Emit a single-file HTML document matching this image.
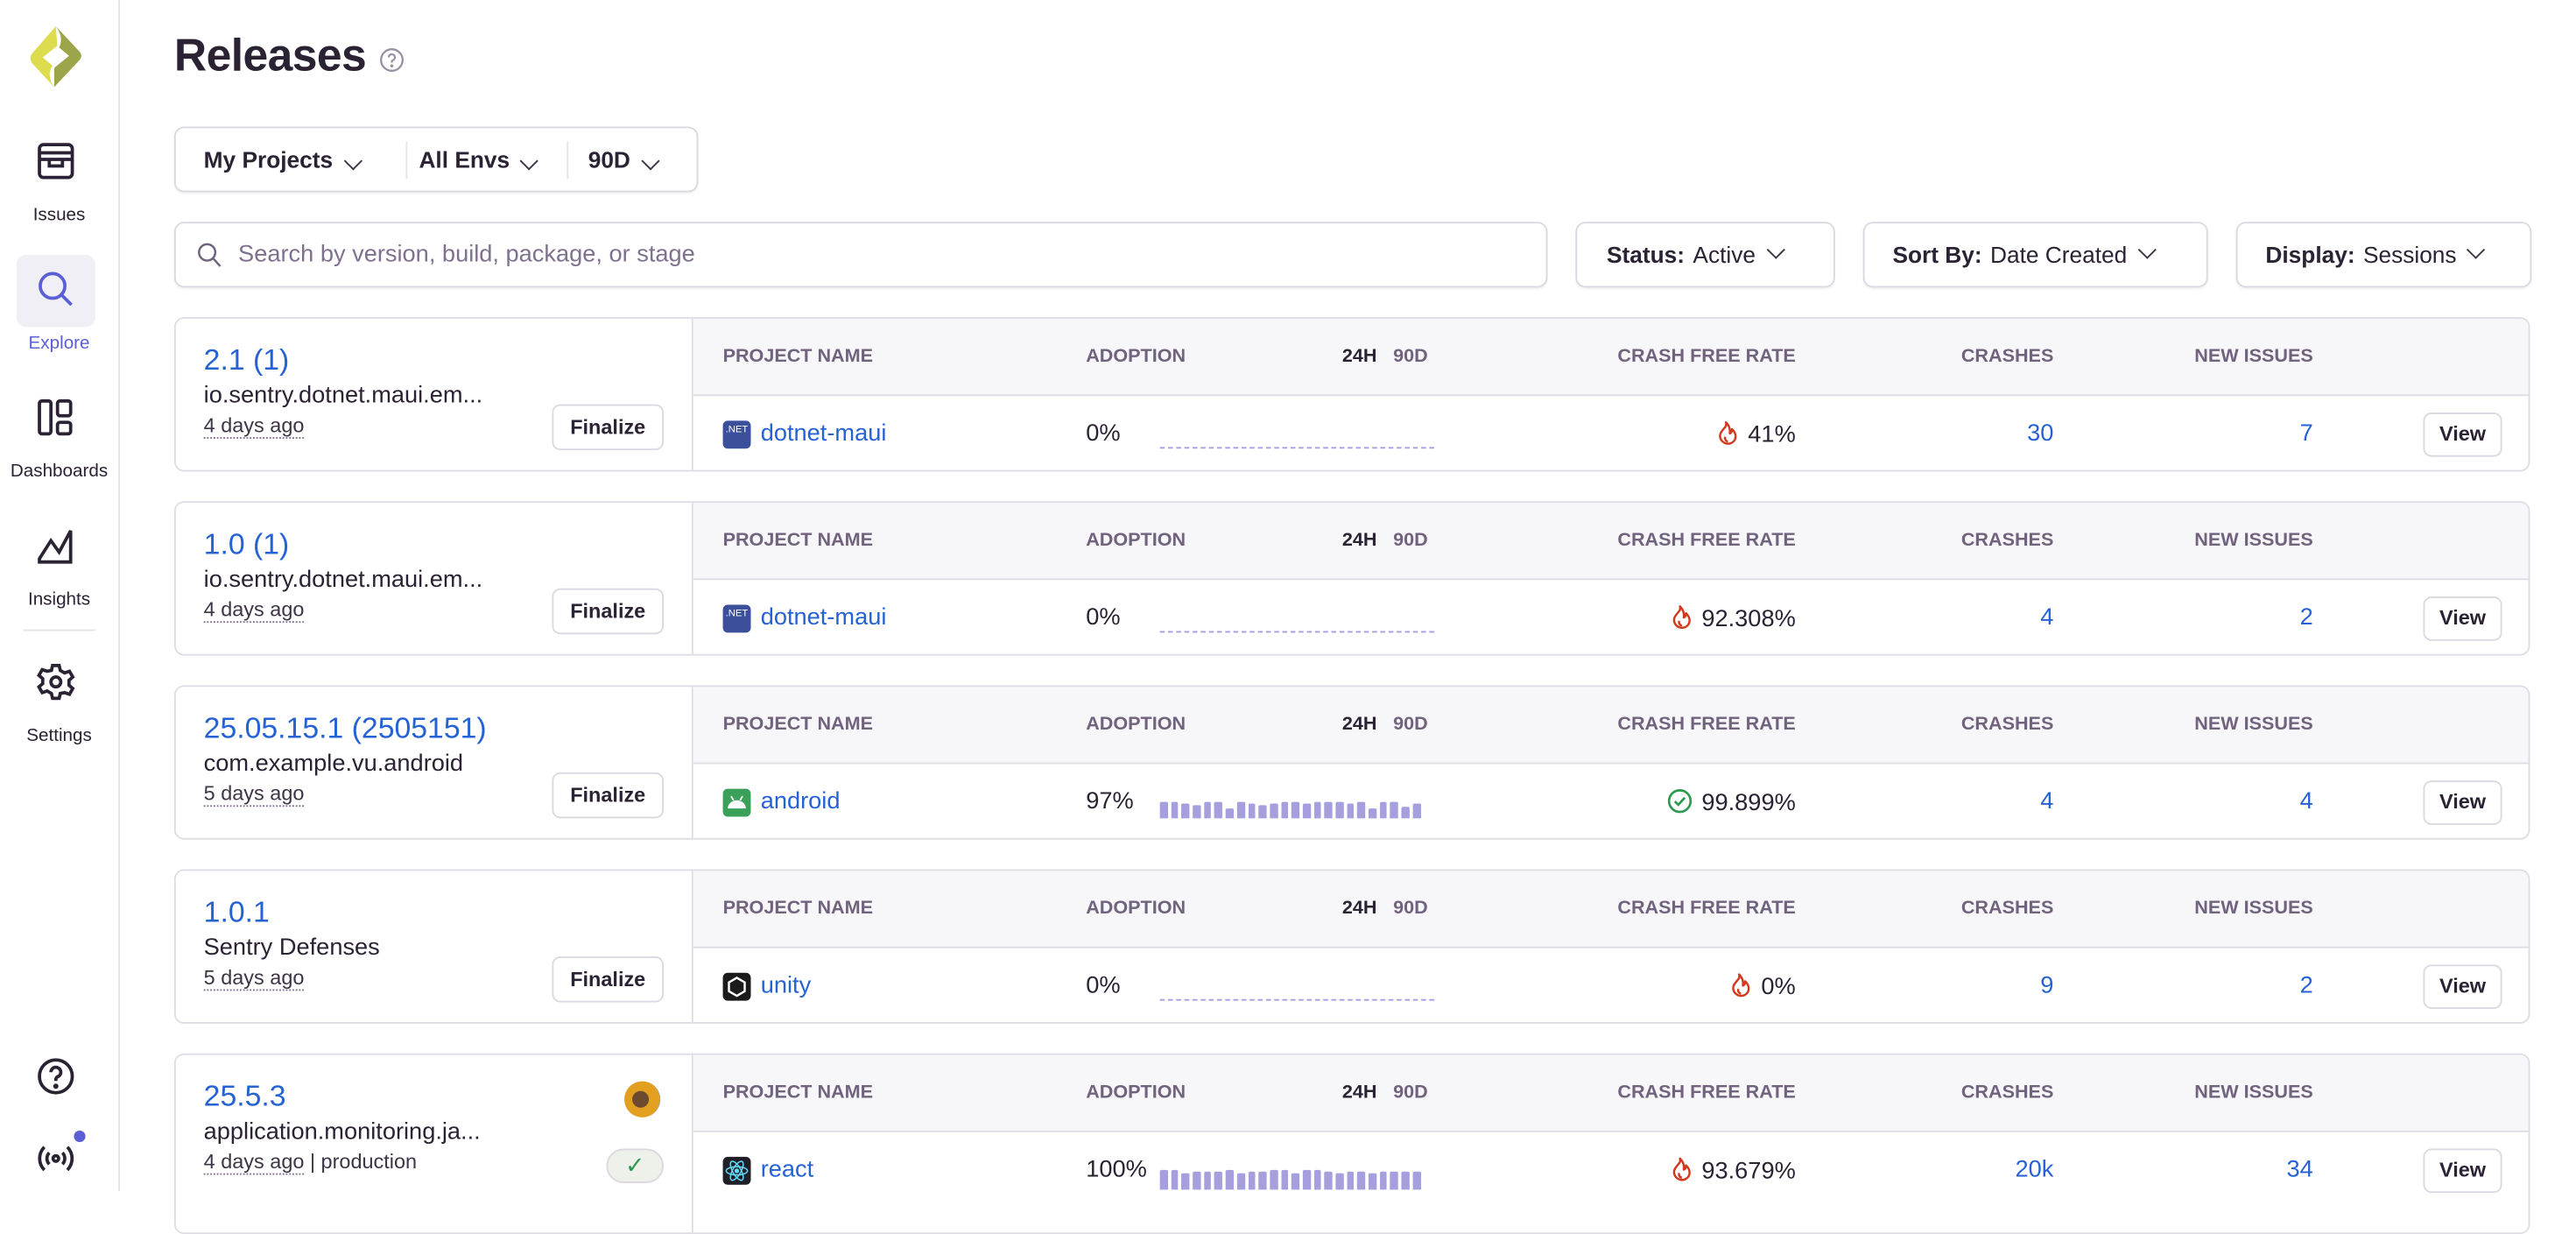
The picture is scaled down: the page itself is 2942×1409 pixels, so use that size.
<!DOCTYPE html>
<html><head><meta charset="utf-8"><style>
*{box-sizing:border-box;margin:0;padding:0}
html,body{width:2942px;height:1360px;overflow:hidden;background:#fff}
#w{position:absolute;left:0;top:0;width:1568px;height:725px;transform:scale(1.87628);transform-origin:0 0;font-family:"Liberation Sans",sans-serif;color:#2b2233}
.abs{position:absolute}
.side{position:absolute;left:0;top:0;width:73px;height:725px;border-right:1px solid #e6e3ea;background:#fff}
.nl{position:absolute;left:0;width:72px;text-align:center;font-size:11px;font-weight:500;color:#2b2233}
.ic{position:absolute;left:22px;width:24px;height:24px}
.btn{position:absolute;border:1px solid #dcd8e2;border-radius:6px;background:#fff;box-shadow:0 1px 1px rgba(0,0,0,.05);font-size:14px;display:flex;align-items:center}
.chev{display:inline-block;width:8px;height:8px;border-right:1.3px solid #3e3446;border-bottom:1.3px solid #3e3446;transform:rotate(45deg);margin-left:8px;margin-top:-6px}
.card{position:absolute;left:106px;width:1434px;height:94px;border:1px solid #e0dce5;border-radius:6px;overflow:hidden;background:#fff}
.lp{position:absolute;left:0;top:0;width:315px;height:100%;border-right:1px solid #e0dce5}
.ver{position:absolute;left:17px;top:15px;font-size:18px;color:#2562d4}
.pkg{position:absolute;left:17px;top:39px;font-size:14.5px;color:#2b2233;white-space:nowrap}
.date{position:absolute;left:17px;top:58px;font-size:12.5px;color:#3e3446;white-space:nowrap}
.date u{text-decoration:none;border-bottom:1px dotted #80708f}
.fin{position:absolute;left:229px;top:52px;width:68px;height:28px;border:1px solid #dcd8e2;border-radius:5px;font-size:12.5px;font-weight:600;text-align:center;line-height:26px}
.hd{position:absolute;left:315px;top:0;right:0;height:47px;background:#f7f6f9;border-bottom:1px solid #e0dce5}
.h{position:absolute;top:17px;font-size:11.5px;font-weight:600;color:#71637e;white-space:nowrap}
.r{text-align:right}
.row{position:absolute;top:62px;font-size:14.5px;white-space:nowrap}
.blue{color:#2562d4}
.pico{position:absolute;left:333px;top:62px;width:17px;height:17px;border-radius:3px}
.view{position:absolute;left:1368px;top:57px;width:48px;height:27px;border:1px solid #dcd8e2;border-radius:5px;font-size:12.5px;font-weight:600;text-align:center;line-height:25px}
.chart{position:absolute;left:599px;top:64px;width:167px;height:16px;display:flex;align-items:flex-end;gap:2px}
.chart i{display:block;width:4.7px;background:#a59fdd;border-radius:1px 1px 0 0}
.dash{position:absolute;left:599px;top:78px;width:167px;border-top:1px dashed #a59fdd}
.fire{vertical-align:-2px;margin-right:6px}
</style></head><body><div id="w">
<svg width="0" height="0" style="position:absolute"><defs><symbol id="fi" viewBox="0 0 14 16"><path d="M6 1C7 4 4 5 2.5 8.2 1.5 10.5 2.5 14 6.5 15 10 15.3 12.5 13 12.3 9.8 12.2 8 11 6.5 10 5.5 10 7 9.5 8 8.5 8.3 9 5.5 8 3 6 1Z M5.5 10.5C5 12 6 13.5 7.3 13.5" fill="none" stroke="#d13a1e" stroke-width="1.4" stroke-linejoin="round"/></symbol></defs></svg>

<div class="side">
  <svg class="abs" style="left:17px;top:15px" width="34" height="39" viewBox="0 0 34 39">
    <path d="M17 1 L3 17 Q0 20.5 3 24 L16 38 Q11 31 15 25 L9 20 L18 15 Z" fill="#dddc4e"/>
    <path d="M17 1 Q22 8 19 14 L25 19 L16 24 L16 38 L31 22 Q34 19 31 16 Z" fill="#9da54b"/>
    <path d="M19 12 L9 20 L16 21 L14 28 L25 19 L18 18 Z" fill="#fff"/>
  </svg>
  <svg class="ic" style="top:86px" viewBox="0 0 24 24" fill="none" stroke="#2b2233" stroke-width="2"><rect x="2" y="2" width="20" height="20" rx="2.5"/><path d="M2 7h20M2 11h20M2 11v0h6v4h8v-4h6"/></svg>
  <div class="nl" style="top:125px">Issues</div>
  <div class="abs" style="left:10px;top:155px;width:48px;height:44px;background:#f0eff6;border-radius:6px"></div>
  <svg class="ic" style="top:164px" viewBox="0 0 24 24" fill="none" stroke="#5b5fd6" stroke-width="2"><circle cx="10" cy="10" r="7.5"/><path d="M15.5 15.5l6 6"/></svg>
  <div class="nl" style="top:203px;color:#5b5fd6">Explore</div>
  <svg class="ic" style="top:242px" viewBox="0 0 24 24" fill="none" stroke="#2b2233" stroke-width="2"><rect x="2" y="2" width="7" height="20" rx="1.5"/><rect x="13" y="2" width="8" height="9" rx="1.5"/><rect x="13" y="15" width="8" height="7" rx="1.5"/></svg>
  <div class="nl" style="top:281px">Dashboards</div>
  <svg class="ic" style="top:320px" viewBox="0 0 24 24" fill="none" stroke="#2b2233" stroke-width="2"><path d="M2 22V20L9 9l5 7 7-13v19z"/></svg>
  <div class="nl" style="top:359px">Insights</div>
  <div class="abs" style="left:14px;top:383px;width:44px;border-top:1px solid #e6e3ea"></div>
  <svg class="ic" style="top:403px" viewBox="0 0 24 24" fill="none" stroke="#2b2233" stroke-width="2"><path d="M10 2h4l.7 3 2.6 1.5 3-1 2 3.5-2.3 2v3l2.3 2-2 3.5-3-1L14.7 19 14 22h-4l-.7-3-2.6-1.5-3 1-2-3.5 2.3-2v-3L1.7 8l2-3.5 3 1L9.3 5z"/><circle cx="12" cy="12" r="3"/></svg>
  <div class="nl" style="top:442px">Settings</div>
  <svg class="ic" style="top:643px" viewBox="0 0 24 24" fill="none" stroke="#2b2233" stroke-width="2"><circle cx="12" cy="12" r="10"/><path d="M9 9.5a3 3 0 1 1 4 2.8c-.7.4-1 1-1 1.7v.8"/><circle cx="12" cy="18" r=".6" fill="#2b2233"/></svg>
  <svg class="ic" style="top:693px" viewBox="0 0 24 24" fill="none" stroke="#2b2233" stroke-width="2"><path d="M5 5a10 10 0 0 0 0 14M19 5a10 10 0 0 1 0 14M8 8.5a5 5 0 0 0 0 7M16 8.5a5 5 0 0 1 0 7"/><circle cx="12" cy="12" r="1.7"/></svg>
  <div class="abs" style="left:45px;top:688px;width:7px;height:7px;border-radius:50%;background:#5b5fd6"></div>
</div>

<div class="abs" style="left:106px;top:18px;font-size:27.5px;font-weight:700;letter-spacing:-.3px">Releases</div>
<svg class="abs" style="left:231px;top:29px" width="15" height="15" viewBox="0 0 16 16" fill="none" stroke="#9a90a4" stroke-width="1.3"><circle cx="8" cy="8" r="7"/><path d="M6 6.3a2 2 0 1 1 2.6 1.9c-.4.2-.6.5-.6 1v.5"/><circle cx="8" cy="11.8" r=".4" fill="#9a90a4"/></svg>

<div class="btn" style="left:106px;top:77px;width:319px;height:40px;font-weight:600">
  <span style="position:absolute;left:17px">My Projects<span class="chev"></span></span>
  <span class="abs" style="left:140px;top:8px;height:23px;border-left:1px solid #e6e3ea"></span>
  <span style="position:absolute;left:148px">All Envs<span class="chev"></span></span>
  <span class="abs" style="left:238px;top:8px;height:23px;border-left:1px solid #e6e3ea"></span>
  <span style="position:absolute;left:251px">90D<span class="chev"></span></span>
</div>

<div class="btn" style="left:106px;top:135px;width:836px;height:40px;color:#80708f;font-size:14.5px">
  <svg style="margin-left:13px;margin-right:10px" width="15" height="16" viewBox="0 0 16 16" fill="none" stroke="#71637e" stroke-width="1.4"><circle cx="6.5" cy="6.5" r="5.3"/><path d="M10.5 10.5l4.5 5"/></svg>Search by version, build, package, or stage
</div>
<div class="btn" style="left:959px;top:135px;width:158px;height:40px;padding-left:18px"><b style="margin-right:5px">Status:</b>Active<span class="chev"></span></div>
<div class="btn" style="left:1134px;top:135px;width:210px;height:40px;padding-left:17px"><b style="margin-right:5px">Sort By:</b>Date Created<span class="chev"></span></div>
<div class="btn" style="left:1361px;top:135px;width:180px;height:40px;padding-left:17px"><b style="margin-right:5px">Display:</b>Sessions<span class="chev"></span></div>

<div class="card" style="top:193px">
  <div class="lp"><div class="ver">2.1 (1)</div><div class="pkg">io.sentry.dotnet.maui.em...</div><div class="date"><u>4 days ago</u></div><div class="fin">Finalize</div></div>
  <div class="hd"></div>
  <div class="h" style="left:333px">PROJECT NAME</div><div class="h" style="left:554px">ADOPTION</div><div class="h" style="left:710px;color:#2b2233">24H</div><div class="h" style="left:741px">90D</div>
  <div class="h r" style="right:446px">CRASH FREE RATE</div><div class="h r" style="right:289px">CRASHES</div><div class="h r" style="right:131px">NEW ISSUES</div>
  <div class="pico" style="background:#3b4f9b;color:#fff;font-size:6px;text-align:center;line-height:9px;padding-top:2px">.NET</div>
  <div class="row blue" style="left:356px">dotnet-maui</div>
  <div class="row" style="left:554px">0%</div><div class="dash"></div>
  <div class="row r" style="right:446px"><svg class="fire" width="13" height="15"><use href="#fi"/></svg>41%</div>
  <div class="row r blue" style="right:289px">30</div><div class="row r blue" style="right:131px">7</div>
  <div class="view">View</div>
</div>

<div class="card" style="top:305px">
  <div class="lp"><div class="ver">1.0 (1)</div><div class="pkg">io.sentry.dotnet.maui.em...</div><div class="date"><u>4 days ago</u></div><div class="fin">Finalize</div></div>
  <div class="hd"></div>
  <div class="h" style="left:333px">PROJECT NAME</div><div class="h" style="left:554px">ADOPTION</div><div class="h" style="left:710px;color:#2b2233">24H</div><div class="h" style="left:741px">90D</div>
  <div class="h r" style="right:446px">CRASH FREE RATE</div><div class="h r" style="right:289px">CRASHES</div><div class="h r" style="right:131px">NEW ISSUES</div>
  <div class="pico" style="background:#3b4f9b;color:#fff;font-size:6px;text-align:center;line-height:9px;padding-top:2px">.NET</div>
  <div class="row blue" style="left:356px">dotnet-maui</div>
  <div class="row" style="left:554px">0%</div><div class="dash"></div>
  <div class="row r" style="right:446px"><svg class="fire" width="13" height="15"><use href="#fi"/></svg>92.308%</div>
  <div class="row r blue" style="right:289px">4</div><div class="row r blue" style="right:131px">2</div>
  <div class="view">View</div>
</div>

<div class="card" style="top:417px">
  <div class="lp"><div class="ver">25.05.15.1 (2505151)</div><div class="pkg">com.example.vu.android</div><div class="date"><u>5 days ago</u></div><div class="fin">Finalize</div></div>
  <div class="hd"></div>
  <div class="h" style="left:333px">PROJECT NAME</div><div class="h" style="left:554px">ADOPTION</div><div class="h" style="left:710px;color:#2b2233">24H</div><div class="h" style="left:741px">90D</div>
  <div class="h r" style="right:446px">CRASH FREE RATE</div><div class="h r" style="right:289px">CRASHES</div><div class="h r" style="right:131px">NEW ISSUES</div>
  <div class="pico" style="background:#3aa05a"><svg width="17" height="17" viewBox="0 0 17 17"><path d="M3 12a5.5 5 0 0 1 11 0z" fill="#fff"/><path d="M5 4.5l1.5 2.5M12 4.5l-1.5 2.5" stroke="#fff" stroke-width="1"/></svg></div>
  <div class="row blue" style="left:356px">android</div>
  <div class="row" style="left:554px">97%</div>
  <div class="chart"><i style="height:10px"></i><i style="height:10px"></i><i style="height:9px"></i><i style="height:8px"></i><i style="height:10px"></i><i style="height:10px"></i><i style="height:6px"></i><i style="height:10px"></i><i style="height:9px"></i><i style="height:8px"></i><i style="height:9px"></i><i style="height:10px"></i><i style="height:10px"></i><i style="height:9px"></i><i style="height:10px"></i><i style="height:10px"></i><i style="height:10px"></i><i style="height:9px"></i><i style="height:10px"></i><i style="height:6px"></i><i style="height:10px"></i><i style="height:10px"></i><i style="height:7px"></i><i style="height:9px"></i></div>
  <div class="row r" style="right:446px"><svg style="vertical-align:-2px;margin-right:6px" width="15" height="15" viewBox="0 0 16 16" fill="none" stroke="#2b9a4e" stroke-width="1.5"><circle cx="8" cy="8" r="7"/><path d="M4.8 8.2l2.2 2.2 4.2-4.6"/></svg>99.899%</div>
  <div class="row r blue" style="right:289px">4</div><div class="row r blue" style="right:131px">4</div>
  <div class="view">View</div>
</div>

<div class="card" style="top:529px">
  <div class="lp"><div class="ver">1.0.1</div><div class="pkg">Sentry Defenses</div><div class="date"><u>5 days ago</u></div><div class="fin">Finalize</div></div>
  <div class="hd"></div>
  <div class="h" style="left:333px">PROJECT NAME</div><div class="h" style="left:554px">ADOPTION</div><div class="h" style="left:710px;color:#2b2233">24H</div><div class="h" style="left:741px">90D</div>
  <div class="h r" style="right:446px">CRASH FREE RATE</div><div class="h r" style="right:289px">CRASHES</div><div class="h r" style="right:131px">NEW ISSUES</div>
  <div class="pico" style="background:#1b1b1b"><svg width="17" height="17" viewBox="0 0 17 17" fill="none" stroke="#fff" stroke-width="1.3"><path d="M8.5 3l4.8 2.8v5.4L8.5 14l-4.8-2.8V5.8z"/></svg></div>
  <div class="row blue" style="left:356px">unity</div>
  <div class="row" style="left:554px">0%</div><div class="dash"></div>
  <div class="row r" style="right:446px"><svg class="fire" width="13" height="15"><use href="#fi"/></svg>0%</div>
  <div class="row r blue" style="right:289px">9</div><div class="row r blue" style="right:131px">2</div>
  <div class="view">View</div>
</div>

<div class="card" style="top:641px;height:110px">
  <div class="lp"><div class="ver">25.5.3</div><div class="pkg">application.monitoring.ja...</div><div class="date"><u>4 days ago</u> | production</div>
    <div class="abs" style="left:273px;top:16px;width:22px;height:22px;border-radius:50%;background:radial-gradient(circle at 45% 50%,#6b4a2e 0 30%,#e3a020 32% 70%,#9aa0a8 72%)"></div>
    <div class="abs" style="left:262px;top:57px;width:35px;height:21px;border-radius:11px;background:#eef0ea;border:1px solid #dcd8e2;color:#2b9a4e;text-align:center;font-size:14px;line-height:19px">&#10003;</div>
  </div>
  <div class="hd"></div>
  <div class="h" style="left:333px">PROJECT NAME</div><div class="h" style="left:554px">ADOPTION</div><div class="h" style="left:710px;color:#2b2233">24H</div><div class="h" style="left:741px">90D</div>
  <div class="h r" style="right:446px">CRASH FREE RATE</div><div class="h r" style="right:289px">CRASHES</div><div class="h r" style="right:131px">NEW ISSUES</div>
  <div class="pico" style="background:#1f1f28"><svg width="17" height="17" viewBox="0 0 17 17" fill="none" stroke="#61dafb" stroke-width=".8"><ellipse cx="8.5" cy="8.5" rx="6.5" ry="2.5"/><ellipse cx="8.5" cy="8.5" rx="6.5" ry="2.5" transform="rotate(60 8.5 8.5)"/><ellipse cx="8.5" cy="8.5" rx="6.5" ry="2.5" transform="rotate(-60 8.5 8.5)"/><circle cx="8.5" cy="8.5" r="1" fill="#61dafb"/></svg></div>
  <div class="row blue" style="left:356px">react</div>
  <div class="row" style="left:554px">100%</div>
  <div class="chart" style="top:66px"><i style="height:12px"></i><i style="height:12px"></i><i style="height:10px"></i><i style="height:11px"></i><i style="height:11px"></i><i style="height:11px"></i><i style="height:12px"></i><i style="height:10px"></i><i style="height:11px"></i><i style="height:11px"></i><i style="height:12px"></i><i style="height:12px"></i><i style="height:10px"></i><i style="height:12px"></i><i style="height:12px"></i><i style="height:11px"></i><i style="height:10px"></i><i style="height:11px"></i><i style="height:11px"></i><i style="height:10px"></i><i style="height:11px"></i><i style="height:11px"></i><i style="height:11px"></i><i style="height:11px"></i></div>
  <div class="row r" style="right:446px"><svg class="fire" width="13" height="15"><use href="#fi"/></svg>93.679%</div>
  <div class="row r blue" style="right:289px">20k</div><div class="row r blue" style="right:131px">34</div>
  <div class="view">View</div>
</div>

</div></body></html>
